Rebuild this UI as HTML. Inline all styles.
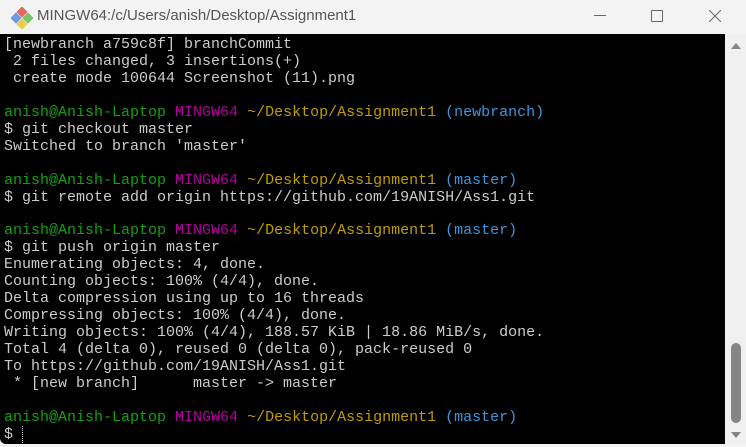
<!DOCTYPE html><html><head><style>
body{margin:0;width:746px;height:447px;overflow:hidden;background:#f3f3f3;position:relative;font-family:"Liberation Sans",sans-serif}
.title{position:absolute;left:0;top:0;width:746px;height:34px;background:#f3f3f3}
.ttext{position:absolute;left:37px;top:7px;font-size:15px;color:#555}
.term{position:absolute;left:0;top:34px;width:725px;height:410px;background:#000;border-bottom-left-radius:6px}
pre{margin:0;position:absolute;left:4px;top:3px;font-family:"Liberation Mono",monospace;font-size:15px;line-height:16.96px;color:#cccccc}
.g{color:#13a10e}.m{color:#b4009e}.y{color:#c19c00}.c{color:#3a96dd}
.sb{position:absolute;left:725px;top:34px;width:21px;height:410px;background:#f0f0f0}
.thumb{position:absolute;left:731px;top:343px;width:10px;height:80px;background:#858585;border-radius:5px}
</style></head><body>
<div class="title">
<svg style="position:absolute;left:11px;top:7px" width="22" height="22" viewBox="0 0 22 22">
<rect x="7" y="1" width="8" height="8" transform="rotate(45 11 5)" fill="#e46a6a"/>
<rect x="1" y="7" width="8" height="8" transform="rotate(45 5 11)" fill="#6a9be4"/>
<rect x="13" y="7" width="8" height="8" transform="rotate(45 17 11)" fill="#7ac36a"/>
<rect x="7" y="13" width="8" height="8" transform="rotate(45 11 17)" fill="#e8cc4a"/>
</svg>
<div class="ttext">MINGW64:/c/Users/anish/Desktop/Assignment1</div>
<div style="position:absolute;left:594px;top:15px;width:12px;height:1px;background:#666"></div>
<div style="position:absolute;left:651px;top:10px;width:10px;height:10px;border:1px solid #666;border-radius:1px"></div>
<svg style="position:absolute;left:709px;top:10px" width="12" height="12"><path d="M0 0L12 12M12 0L0 12" stroke="#666" stroke-width="1"/></svg>
</div>
<div class="term"><pre>[newbranch a759c8f] branchCommit
 2 files changed, 3 insertions(+)
 create mode 100644 Screenshot (11).png

<span class="g">anish@Anish-Laptop</span> <span class="m">MINGW64</span> <span class="y">~/Desktop/Assignment1</span> <span class="c">(newbranch)</span>
$ git checkout master
Switched to branch 'master'

<span class="g">anish@Anish-Laptop</span> <span class="m">MINGW64</span> <span class="y">~/Desktop/Assignment1</span> <span class="c">(master)</span>
$ git remote add origin https://github.com/19ANISH/Ass1.git

<span class="g">anish@Anish-Laptop</span> <span class="m">MINGW64</span> <span class="y">~/Desktop/Assignment1</span> <span class="c">(master)</span>
$ git push origin master
Enumerating objects: 4, done.
Counting objects: 100% (4/4), done.
Delta compression using up to 16 threads
Compressing objects: 100% (4/4), done.
Writing objects: 100% (4/4), 188.57 KiB | 18.86 MiB/s, done.
Total 4 (delta 0), reused 0 (delta 0), pack-reused 0
To https://github.com/19ANISH/Ass1.git
 * [new branch]      master -&gt; master

<span class="g">anish@Anish-Laptop</span> <span class="m">MINGW64</span> <span class="y">~/Desktop/Assignment1</span> <span class="c">(master)</span>
$ <span style="border-left:1px dotted #ccc"></span></pre></div>
<div class="sb"></div>
<svg style="position:absolute;left:730px;top:42px" width="12" height="8"><path d="M1 7L6 1L11 7Z" fill="#858585"/></svg>
<div class="thumb"></div>
<svg style="position:absolute;left:730px;top:431px" width="12" height="8"><path d="M1 1L6 7L11 1Z" fill="#858585"/></svg>
</body></html>
